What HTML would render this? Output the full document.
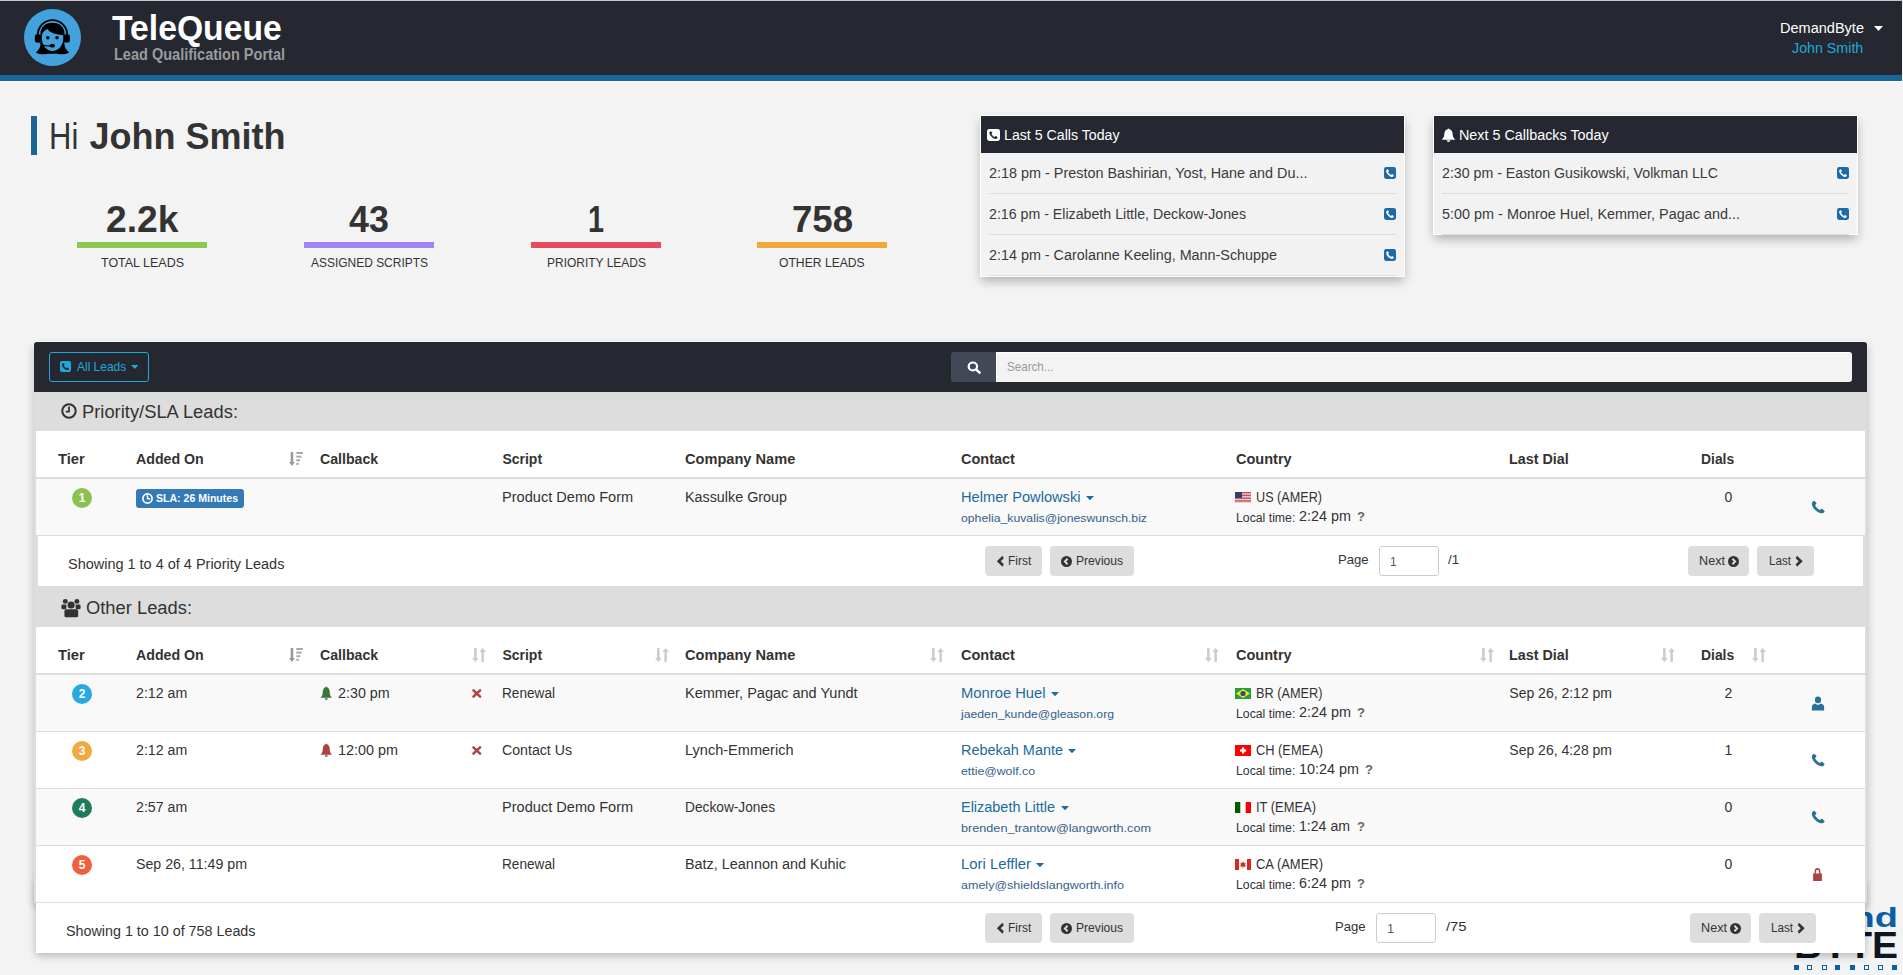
<!DOCTYPE html>
<html><head><meta charset="utf-8"><title>TeleQueue</title>
<style>
html,body{margin:0;padding:0;}
body{width:1903px;height:975px;overflow:hidden;position:relative;background:#f3f3f3;font-family:"Liberation Sans", sans-serif;}
.t{position:absolute;white-space:pre;}
svg{display:block;}
</style></head><body>
<div style="position:absolute;left:0px;top:0px;width:1903px;height:1px;background:#c9c7c9"></div>
<div style="position:absolute;left:0px;top:1px;width:1902px;height:74px;background:#252830"></div>
<div style="position:absolute;left:0px;top:75px;width:1902px;height:6px;background:#1b6698"></div>
<div style="position:absolute;left:0px;top:81px;width:1902px;height:1px;background:#fcfaf8"></div>
<svg style="position:absolute;left:24px;top:9px;" width="57" height="57" viewBox="0 0 57 57" ><circle cx="28.5" cy="28.5" r="28.5" fill="#43a2dc"/><path fill="#000" d="M28.5,13.8 C21,13.8 16.4,18.5 16.4,25 L16.6,34 C16.8,38 15,41 11.8,43.5 C15,45.5 20,45.8 24,44.8 L33,44.8 C37,45.8 42,45.5 45.2,43.5 C42,41 40.2,38 40.4,34 L40.6,25 C40.6,18.5 36,13.8 28.5,13.8 Z"/><path fill="#43a2dc" d="M17.8,27 C18,24 20,21.5 23.5,20 C25,22.5 28,24 32,25 C35,25.7 38,26 39.2,26.2 C39.4,27 39.4,28 39.4,29 C39.4,36 34.5,42 28.5,42 C22.5,42 17.8,36 17.8,29 Z"/><circle cx="23.8" cy="28.8" r="1.75" fill="#000"/><circle cx="33" cy="28.8" r="1.75" fill="#000"/><path d="M13.8,25.8 A14.7,14.7 0 0 1 43.2,25.8" fill="none" stroke="#000" stroke-width="1.9"/><rect x="10.8" y="25.3" width="6.2" height="8.3" rx="2.6" fill="#000"/><rect x="39.7" y="25.3" width="6.2" height="8.3" rx="2.6" fill="#000"/><path d="M15.5,33 C17.5,36 22,37.2 26,36.8" fill="none" stroke="#000" stroke-width="1.3"/><ellipse cx="28.3" cy="36.7" rx="2.6" ry="1.9" fill="#000"/></svg>
<div class="t" style="left:111.60px;top:6.95px;font-size:35px;line-height:42px;font-weight:700;color:#fff;transform:scaleX(0.9622);transform-origin:0 0;">TeleQueue</div>
<div class="t" style="left:113.60px;top:44.50px;font-size:16px;line-height:19px;font-weight:700;color:#9b9b9b;transform:scaleX(0.9072);transform-origin:0 0;">Lead Qualification Portal</div>
<div class="t" style="left:1779.80px;top:19.60px;font-size:14px;line-height:17px;font-weight:400;color:#fff;transform:scaleX(1.0378);transform-origin:0 0;">DemandByte</div>
<svg style="position:absolute;left:1873.5px;top:25.8px;" width="9" height="5" viewBox="0 0 9 5" ><path d="M0,0 H9 L4.5,5 Z" fill="#fff"/></svg>
<div class="t" style="left:1791.90px;top:39.60px;font-size:14px;line-height:17px;font-weight:400;color:#1fa8de;transform:scaleX(1.0179);transform-origin:0 0;">John Smith</div>
<div style="position:absolute;left:31px;top:116px;width:6px;height:39px;background:#1b6698"></div>
<div class="t" style="left:49.00px;top:114.60px;font-size:36px;line-height:43px;font-weight:400;color:#333;transform:scaleX(0.8618);transform-origin:0 0;-webkit-text-stroke:1px #f3f3f3;paint-order:stroke fill;">Hi</div>
<div class="t" style="left:89.60px;top:114.60px;font-size:36px;line-height:43px;font-weight:700;color:#333;">John Smith</div>
<div class="t" style="left:105.75px;top:197.90px;font-size:36px;line-height:43px;font-weight:700;color:#333;transform:scaleX(1.0346);transform-origin:0 0;">2.2k</div>
<div style="position:absolute;left:77px;top:242px;width:130px;height:6px;background:#8dc653"></div>
<div class="t" style="left:100.50px;top:255.45px;font-size:13px;line-height:16px;font-weight:400;color:#333;transform:scaleX(0.9599);transform-origin:0 0;">TOTAL LEADS</div>
<div class="t" style="left:349.10px;top:197.90px;font-size:36px;line-height:43px;font-weight:700;color:#333;transform:scaleX(0.9938);transform-origin:0 0;">43</div>
<div style="position:absolute;left:304px;top:242px;width:130px;height:6px;background:#a086f6"></div>
<div class="t" style="left:310.50px;top:255.45px;font-size:13px;line-height:16px;font-weight:400;color:#333;transform:scaleX(0.9202);transform-origin:0 0;">ASSIGNED SCRIPTS</div>
<div class="t" style="left:588.00px;top:197.90px;font-size:36px;line-height:43px;font-weight:700;color:#333;transform:scaleX(0.7988);transform-origin:0 0;">1</div>
<div style="position:absolute;left:531px;top:242px;width:130px;height:6px;background:#e64a5e"></div>
<div class="t" style="left:546.50px;top:255.45px;font-size:13px;line-height:16px;font-weight:400;color:#333;transform:scaleX(0.9217);transform-origin:0 0;">PRIORITY LEADS</div>
<div class="t" style="left:791.50px;top:197.90px;font-size:36px;line-height:43px;font-weight:700;color:#333;transform:scaleX(1.0153);transform-origin:0 0;">758</div>
<div style="position:absolute;left:757px;top:242px;width:130px;height:6px;background:#f1a83f"></div>
<div class="t" style="left:779.15px;top:255.45px;font-size:13px;line-height:16px;font-weight:400;color:#333;transform:scaleX(0.9341);transform-origin:0 0;">OTHER LEADS</div>
<div style="position:absolute;left:981px;top:116px;width:423px;height:160px;background:#f2f2f2;box-shadow:0 0 0 1px #fff,0 5px 10px rgba(0,0,0,0.28)"></div>
<div style="position:absolute;left:981px;top:116px;width:423px;height:37px;background:#252830"></div>
<div class="t" style="left:989.00px;top:164.60px;font-size:14px;line-height:17px;font-weight:400;color:#3a3a3a;transform:scaleX(1.0282);transform-origin:0 0;">2:18 pm - Preston Bashirian, Yost, Hane and Du...</div>
<svg style="position:absolute;left:1384px;top:167px;overflow:visible" width="12" height="12" viewBox="0 0 100 100" preserveAspectRatio="none"><rect x="0" y="0" width="100" height="100" rx="18" fill="#1f6aa5"/><g transform="translate(14,14) scale(0.72)"><path fill="#fff" d="M22,6 C13,9 5,17 6,30 C9,57 44,92 71,95 C84,96 92,89 95,80 L80,64 C76,61 71,62 68,66 L63,72 C49,65 35,51 28,37 L34,31 C38,28 39,23 37,20 Z"/></g></svg>
<div style="position:absolute;left:989px;top:193px;width:407px;height:1px;background:#dcdcdc"></div>
<div class="t" style="left:989.00px;top:205.60px;font-size:14px;line-height:17px;font-weight:400;color:#3a3a3a;transform:scaleX(1.0131);transform-origin:0 0;">2:16 pm - Elizabeth Little, Deckow-Jones</div>
<svg style="position:absolute;left:1384px;top:208px;overflow:visible" width="12" height="12" viewBox="0 0 100 100" preserveAspectRatio="none"><rect x="0" y="0" width="100" height="100" rx="18" fill="#1f6aa5"/><g transform="translate(14,14) scale(0.72)"><path fill="#fff" d="M22,6 C13,9 5,17 6,30 C9,57 44,92 71,95 C84,96 92,89 95,80 L80,64 C76,61 71,62 68,66 L63,72 C49,65 35,51 28,37 L34,31 C38,28 39,23 37,20 Z"/></g></svg>
<div style="position:absolute;left:989px;top:234px;width:407px;height:1px;background:#dcdcdc"></div>
<div class="t" style="left:989.00px;top:246.60px;font-size:14px;line-height:17px;font-weight:400;color:#3a3a3a;transform:scaleX(1.0251);transform-origin:0 0;">2:14 pm - Carolanne Keeling, Mann-Schuppe</div>
<svg style="position:absolute;left:1384px;top:249px;overflow:visible" width="12" height="12" viewBox="0 0 100 100" preserveAspectRatio="none"><rect x="0" y="0" width="100" height="100" rx="18" fill="#1f6aa5"/><g transform="translate(14,14) scale(0.72)"><path fill="#fff" d="M22,6 C13,9 5,17 6,30 C9,57 44,92 71,95 C84,96 92,89 95,80 L80,64 C76,61 71,62 68,66 L63,72 C49,65 35,51 28,37 L34,31 C38,28 39,23 37,20 Z"/></g></svg>
<div style="position:absolute;left:989px;top:275px;width:407px;height:1px;background:#dcdcdc"></div>
<div class="t" style="left:1004.00px;top:126.60px;font-size:14px;line-height:17px;font-weight:400;color:#fff;transform:scaleX(1.0119);transform-origin:0 0;">Last 5 Calls Today</div>
<svg style="position:absolute;left:987px;top:129px;overflow:visible" width="13" height="12" viewBox="0 0 100 100" preserveAspectRatio="none"><rect x="0" y="0" width="100" height="100" rx="18" fill="#fff"/><g transform="translate(14,14) scale(0.72)"><path fill="#252830" d="M22,6 C13,9 5,17 6,30 C9,57 44,92 71,95 C84,96 92,89 95,80 L80,64 C76,61 71,62 68,66 L63,72 C49,65 35,51 28,37 L34,31 C38,28 39,23 37,20 Z"/></g></svg>
<div style="position:absolute;left:1434px;top:116px;width:423px;height:118px;background:#f2f2f2;box-shadow:0 0 0 1px #fff,0 5px 10px rgba(0,0,0,0.28)"></div>
<div style="position:absolute;left:1434px;top:116px;width:423px;height:37px;background:#252830"></div>
<div class="t" style="left:1442.00px;top:164.60px;font-size:14px;line-height:17px;font-weight:400;color:#3a3a3a;transform:scaleX(1.0134);transform-origin:0 0;">2:30 pm - Easton Gusikowski, Volkman LLC</div>
<svg style="position:absolute;left:1837px;top:167px;overflow:visible" width="12" height="12" viewBox="0 0 100 100" preserveAspectRatio="none"><rect x="0" y="0" width="100" height="100" rx="18" fill="#1f6aa5"/><g transform="translate(14,14) scale(0.72)"><path fill="#fff" d="M22,6 C13,9 5,17 6,30 C9,57 44,92 71,95 C84,96 92,89 95,80 L80,64 C76,61 71,62 68,66 L63,72 C49,65 35,51 28,37 L34,31 C38,28 39,23 37,20 Z"/></g></svg>
<div style="position:absolute;left:1442px;top:193px;width:407px;height:1px;background:#dcdcdc"></div>
<div class="t" style="left:1442.00px;top:205.60px;font-size:14px;line-height:17px;font-weight:400;color:#3a3a3a;transform:scaleX(1.0294);transform-origin:0 0;">5:00 pm - Monroe Huel, Kemmer, Pagac and...</div>
<svg style="position:absolute;left:1837px;top:208px;overflow:visible" width="12" height="12" viewBox="0 0 100 100" preserveAspectRatio="none"><rect x="0" y="0" width="100" height="100" rx="18" fill="#1f6aa5"/><g transform="translate(14,14) scale(0.72)"><path fill="#fff" d="M22,6 C13,9 5,17 6,30 C9,57 44,92 71,95 C84,96 92,89 95,80 L80,64 C76,61 71,62 68,66 L63,72 C49,65 35,51 28,37 L34,31 C38,28 39,23 37,20 Z"/></g></svg>
<div style="position:absolute;left:1442px;top:234px;width:407px;height:1px;background:#dcdcdc"></div>
<div class="t" style="left:1459.00px;top:126.60px;font-size:14px;line-height:17px;font-weight:400;color:#fff;transform:scaleX(1.0250);transform-origin:0 0;">Next 5 Callbacks Today</div>
<svg style="position:absolute;left:1440.5px;top:128px;overflow:visible" width="15" height="14" viewBox="0 0 100 100" preserveAspectRatio="none"><path fill="#fff" d="M50,4 C47,4 45,6 45,9 C30,12 22,26 22,44 C22,64 14,74 4,84 L96,84 C86,74 78,64 78,44 C78,26 70,12 55,9 C55,6 53,4 50,4 Z"/><path fill="#fff" d="M38,88 A12,12 0 0 0 62,88 Z"/></svg>
<div class="t" style="left:1747.50px;top:901.40px;font-size:28px;line-height:34px;font-weight:700;color:#0b5ea8;transform:scaleX(1.3579);transform-origin:0 0;">Demand</div>
<div class="t" style="left:1793.60px;top:924.30px;font-size:36px;line-height:43px;font-weight:700;color:#0e1621;transform:scaleX(1.0832);transform-origin:0 0;">BYTE</div>
<div style="position:absolute;left:1794px;top:965px;width:5px;height:5px;background:#0b5ea8"></div>
<div style="position:absolute;left:1807px;top:965px;width:5px;height:5px;border:1.3px solid #0b5ea8;box-sizing:border-box"></div>
<div style="position:absolute;left:1822px;top:965px;width:5px;height:5px;border:1.3px solid #0b5ea8;box-sizing:border-box"></div>
<div style="position:absolute;left:1835px;top:965px;width:5px;height:5px;background:#0b5ea8"></div>
<div style="position:absolute;left:1850px;top:965px;width:5px;height:5px;background:#0b5ea8"></div>
<div style="position:absolute;left:1864px;top:965px;width:5px;height:5px;border:1.3px solid #0b5ea8;box-sizing:border-box"></div>
<div style="position:absolute;left:1878px;top:965px;width:5px;height:5px;border:1.3px solid #0b5ea8;box-sizing:border-box"></div>
<div style="position:absolute;left:1892px;top:965px;width:5px;height:5px;background:#0b5ea8"></div>
<div style="position:absolute;left:36px;top:880px;width:1829px;height:73px;background:#fff;box-shadow:0 3px 8px rgba(0,0,0,0.25)"></div>
<div style="position:absolute;left:33px;top:341px;width:1835px;height:52px;background:#fff;border-radius:4px 4px 0 0"></div>
<div style="position:absolute;left:34px;top:342px;width:1833px;height:561px;background:#dddddd;border-radius:3px 3px 0 0;box-shadow:0 4px 8px rgba(0,0,0,0.25)"></div>
<div style="position:absolute;left:34px;top:342px;width:1833px;height:50px;background:#252830;border-radius:3px 3px 0 0"></div>
<div style="position:absolute;left:49px;top:352px;width:98px;height:28px;border:1px solid #1fa8de;border-radius:3px"></div>
<svg style="position:absolute;left:59.5px;top:361px;overflow:visible" width="11" height="11" viewBox="0 0 100 100" preserveAspectRatio="none"><rect x="0" y="0" width="100" height="100" rx="18" fill="#1fa8de"/><g transform="translate(14,14) scale(0.72)"><path fill="#252830" d="M22,6 C13,9 5,17 6,30 C9,57 44,92 71,95 C84,96 92,89 95,80 L80,64 C76,61 71,62 68,66 L63,72 C49,65 35,51 28,37 L34,31 C38,28 39,23 37,20 Z"/></g></svg>
<div class="t" style="left:77.30px;top:359.45px;font-size:13px;line-height:16px;font-weight:400;color:#1fa8de;transform:scaleX(0.9199);transform-origin:0 0;">All Leads</div>
<svg style="position:absolute;left:130.5px;top:365px;" width="7.5" height="4" viewBox="0 0 7.5 4" ><path d="M0,0 H7.5 L3.75,4 Z" fill="#1fa8de"/></svg>
<div style="position:absolute;left:951px;top:352px;width:45px;height:30px;background:#434857;border-radius:3px 0 0 3px"></div>
<svg style="position:absolute;left:966.5px;top:361px;overflow:visible" width="14" height="13" viewBox="0 0 100 100" preserveAspectRatio="none"><circle cx="42" cy="42" r="30" fill="none" stroke="#fff" stroke-width="16"/><path d="M64,64 L90,90" stroke="#fff" stroke-width="18" stroke-linecap="round"/></svg>
<div style="position:absolute;left:996px;top:352px;width:855px;height:29px;background:#f3f3f3;border-top:1px solid #fff;border-left:1px solid #fff;border-radius:0 3px 3px 0;box-sizing:content-box;width:855px;height:29px"></div>
<div class="t" style="left:1006.50px;top:359.45px;font-size:13px;line-height:16px;font-weight:400;color:#999;transform:scaleX(0.8937);transform-origin:0 0;">Search...</div>
<div class="t" style="left:82.00px;top:400.70px;font-size:18px;line-height:22px;font-weight:400;color:#333;transform:scaleX(1.0190);transform-origin:0 0;">Priority/SLA Leads:</div>
<svg style="position:absolute;left:61px;top:403px;overflow:visible" width="16" height="16" viewBox="0 0 100 100" preserveAspectRatio="none"><circle cx="50" cy="50" r="42" fill="none" stroke="#333" stroke-width="13"/><path d="M50,22 V54 H30" fill="none" stroke="#333" stroke-width="11"/></svg>
<div class="t" style="left:85.80px;top:596.70px;font-size:18px;line-height:22px;font-weight:400;color:#333;transform:scaleX(1.0186);transform-origin:0 0;">Other Leads:</div>
<svg style="position:absolute;left:60.5px;top:598.5px;overflow:visible" width="20" height="18.5" viewBox="0 0 100 100" preserveAspectRatio="none"><ellipse cx="21.5" cy="13" rx="12.5" ry="13" fill="#333"/><ellipse cx="79.5" cy="13" rx="12.5" ry="13" fill="#333"/><ellipse cx="50.5" cy="33" rx="18" ry="19" fill="#333"/><rect x="2" y="30" width="25" height="25" rx="7" fill="#333"/><rect x="73" y="30" width="25" height="25" rx="7" fill="#333"/><rect x="17" y="56" width="69" height="43" rx="9" fill="#333"/></svg>
<div style="position:absolute;left:36px;top:431px;width:1829px;height:46px;background:#fff"></div>
<div style="position:absolute;left:36px;top:477px;width:1829px;height:2px;background:#dddddd"></div>
<div class="t" style="left:58.00px;top:450.90px;font-size:14px;line-height:17px;font-weight:700;color:#333;transform:scaleX(1.0536);transform-origin:0 0;">Tier</div>
<div class="t" style="left:136.20px;top:450.90px;font-size:14px;line-height:17px;font-weight:700;color:#333;transform:scaleX(1.0136);transform-origin:0 0;">Added On</div>
<div class="t" style="left:319.90px;top:450.90px;font-size:14px;line-height:17px;font-weight:700;color:#333;transform:scaleX(1.0088);transform-origin:0 0;">Callback</div>
<div class="t" style="left:502.40px;top:450.90px;font-size:14px;line-height:17px;font-weight:700;color:#333;">Script</div>
<div class="t" style="left:685.40px;top:450.90px;font-size:14px;line-height:17px;font-weight:700;color:#333;transform:scaleX(1.0424);transform-origin:0 0;">Company Name</div>
<div class="t" style="left:960.50px;top:450.90px;font-size:14px;line-height:17px;font-weight:700;color:#333;transform:scaleX(1.0341);transform-origin:0 0;">Contact</div>
<div class="t" style="left:1235.60px;top:450.90px;font-size:14px;line-height:17px;font-weight:700;color:#333;transform:scaleX(1.0378);transform-origin:0 0;">Country</div>
<div class="t" style="left:1509.30px;top:450.90px;font-size:14px;line-height:17px;font-weight:700;color:#333;transform:scaleX(1.0230);transform-origin:0 0;">Last Dial</div>
<div class="t" style="left:1701.00px;top:450.90px;font-size:14px;line-height:17px;font-weight:700;color:#333;transform:scaleX(0.9920);transform-origin:0 0;">Dials</div>
<svg style="position:absolute;left:289px;top:452.3px;overflow:visible" width="14" height="14" viewBox="0 0 100 100" preserveAspectRatio="none"><path fill="#999" d="M12,0 H30 V72 H42 L21,100 L0,72 H12 Z"/><rect x="52" y="0" width="48" height="14" fill="#aaa"/><rect x="52" y="26" width="38" height="14" fill="#aaa"/><rect x="52" y="52" width="28" height="14" fill="#aaa"/><rect x="52" y="78" width="18" height="14" fill="#aaa"/></svg>
<div style="position:absolute;left:36px;top:479px;width:1829px;height:56px;background:#f9f9f9"></div>
<div style="position:absolute;left:36px;top:535px;width:1829px;height:1px;background:#dddddd"></div>
<div style="position:absolute;left:72px;top:488px;width:20px;height:20px;background:#8cc152;border-radius:50%"></div>
<div class="t" style="left:78.66px;top:491.30px;font-size:12px;line-height:14px;font-weight:700;color:#fff;">1</div>
<div style="position:absolute;left:136px;top:489px;width:108px;height:19px;background:#337ab7;border-radius:3px"></div>
<svg style="position:absolute;left:142px;top:492.5px;overflow:visible" width="11" height="11" viewBox="0 0 100 100" preserveAspectRatio="none"><circle cx="50" cy="50" r="42" fill="none" stroke="#fff" stroke-width="15"/><path d="M50,20 V52 H74" fill="none" stroke="#fff" stroke-width="13"/></svg>
<div class="t" style="left:155.60px;top:492.15px;font-size:11px;line-height:13px;font-weight:700;color:#fff;transform:scaleX(0.9582);transform-origin:0 0;">SLA: 26 Minutes</div>
<div class="t" style="left:502.40px;top:488.60px;font-size:14px;line-height:17px;font-weight:400;color:#333;transform:scaleX(1.0409);transform-origin:0 0;">Product Demo Form</div>
<div class="t" style="left:685.40px;top:488.60px;font-size:14px;line-height:17px;font-weight:400;color:#333;transform:scaleX(1.0240);transform-origin:0 0;">Kassulke Group</div>
<div class="t" style="left:960.50px;top:488.60px;font-size:14px;line-height:17px;font-weight:400;color:#236a9c;transform:scaleX(1.0450);transform-origin:0 0;">Helmer Powlowski</div>
<svg style="position:absolute;left:1086px;top:496px;" width="8" height="4.3" viewBox="0 0 8 4.3" ><path d="M0,0 H8 L4.0,4.3 Z" fill="#236a9c"/></svg>
<div class="t" style="left:960.50px;top:511.48px;font-size:11.5px;line-height:14px;font-weight:400;color:#34608a;transform:scaleX(1.0647);transform-origin:0 0;">ophelia_kuvalis@joneswunsch.biz</div>
<svg style="position:absolute;left:1235px;top:492px;" width="16" height="11" viewBox="0 0 16 11" ><rect width="16" height="11" fill="#fff"/><rect y="0.00" width="16" height="0.79" fill="#b22234"/><rect y="1.57" width="16" height="0.79" fill="#b22234"/><rect y="3.14" width="16" height="0.79" fill="#b22234"/><rect y="4.71" width="16" height="0.79" fill="#b22234"/><rect y="6.29" width="16" height="0.79" fill="#b22234"/><rect y="7.86" width="16" height="0.79" fill="#b22234"/><rect y="9.43" width="16" height="0.79" fill="#b22234"/><rect width="7" height="6" fill="#3c3b6e"/></svg>
<div class="t" style="left:1255.70px;top:488.60px;font-size:14px;line-height:17px;font-weight:400;color:#333;transform:scaleX(0.9026);transform-origin:0 0;">US (AMER)</div>
<div class="t" style="left:1235.50px;top:510.60px;font-size:12px;line-height:14px;font-weight:400;color:#333;transform:scaleX(1.0219);transform-origin:0 0;">Local time:</div>
<div class="t" style="left:1299.40px;top:508.40px;font-size:14px;line-height:17px;font-weight:400;color:#333;transform:scaleX(1.0278);transform-origin:0 0;">2:24 pm</div>
<div class="t" style="left:1357.00px;top:509.25px;font-size:13px;line-height:16px;font-weight:700;color:#666;">?</div>
<div class="t" style="left:1724.60px;top:488.60px;font-size:14px;line-height:17px;font-weight:400;color:#333;">0</div>
<svg style="position:absolute;left:1810.6px;top:500px;overflow:visible" width="14.4" height="14" viewBox="0 0 100 100" preserveAspectRatio="none"><path fill="#2a6f96" d="M22,6 C13,9 5,17 6,30 C9,57 44,92 71,95 C84,96 92,89 95,80 L80,64 C76,61 71,62 68,66 L63,72 C49,65 35,51 28,37 L34,31 C38,28 39,23 37,20 Z"/></svg>
<div style="position:absolute;left:38px;top:536px;width:1825px;height:50px;background:#fff"></div>
<div class="t" style="left:68.10px;top:556.10px;font-size:14px;line-height:17px;font-weight:400;color:#333;transform:scaleX(1.0337);transform-origin:0 0;">Showing 1 to 4 of 4 Priority Leads</div>
<div style="position:absolute;left:985px;top:546px;width:57px;height:30px;background:#dddddd;border-radius:4px"></div>
<div style="position:absolute;left:1050px;top:546px;width:84px;height:30px;background:#dddddd;border-radius:4px"></div>
<div style="position:absolute;left:1688px;top:546px;width:61px;height:30px;background:#dddddd;border-radius:4px"></div>
<div style="position:absolute;left:1757px;top:546px;width:57px;height:30px;background:#dddddd;border-radius:4px"></div>
<svg style="position:absolute;left:996.5px;top:555.5px;overflow:visible" width="7.5" height="10.5" viewBox="0 0 100 100" preserveAspectRatio="none"><path d="M82,10 L24,50 L82,90" fill="none" stroke="#333" stroke-width="30" stroke-linejoin="miter" stroke-miterlimit="10"/></svg>
<div class="t" style="left:1007.90px;top:553.80px;font-size:12px;line-height:14px;font-weight:400;color:#333;transform:scaleX(0.9945);transform-origin:0 0;">First</div>
<svg style="position:absolute;left:1061px;top:556px;overflow:visible" width="11" height="11" viewBox="0 0 100 100" preserveAspectRatio="none"><circle cx="50" cy="50" r="50" fill="#333"/><path d="M60,25 L35,50 L60,75" fill="none" stroke="#ddd" stroke-width="17"/></svg>
<div class="t" style="left:1075.80px;top:553.80px;font-size:12px;line-height:14px;font-weight:400;color:#333;transform:scaleX(1.0088);transform-origin:0 0;">Previous</div>
<div class="t" style="left:1699.30px;top:553.80px;font-size:12px;line-height:14px;font-weight:400;color:#333;transform:scaleX(1.0532);transform-origin:0 0;">Next</div>
<svg style="position:absolute;left:1728.2px;top:556px;overflow:visible" width="11" height="11" viewBox="0 0 100 100" preserveAspectRatio="none"><circle cx="50" cy="50" r="50" fill="#333"/><path d="M40,25 L65,50 L40,75" fill="none" stroke="#ddd" stroke-width="17"/></svg>
<div class="t" style="left:1769.00px;top:553.80px;font-size:12px;line-height:14px;font-weight:400;color:#333;transform:scaleX(0.9697);transform-origin:0 0;">Last</div>
<svg style="position:absolute;left:1794.7px;top:555.5px;overflow:visible" width="7.5" height="10.5" viewBox="0 0 100 100" preserveAspectRatio="none"><path d="M18,10 L76,50 L18,90" fill="none" stroke="#333" stroke-width="30" stroke-linejoin="miter" stroke-miterlimit="10"/></svg>
<div class="t" style="left:1337.60px;top:552.45px;font-size:13px;line-height:16px;font-weight:400;color:#333;transform:scaleX(1.0074);transform-origin:0 0;">Page</div>
<div style="position:absolute;left:1379px;top:546px;width:58px;height:28px;background:#fff;border:1px solid #cccccc;border-radius:3px"></div>
<div class="t" style="left:1390.00px;top:554.80px;font-size:12px;line-height:14px;font-weight:400;color:#555;">1</div>
<div class="t" style="left:1448.30px;top:552.45px;font-size:13px;line-height:16px;font-weight:400;color:#333;transform:scaleX(1.0236);transform-origin:0 0;">/1</div>
<div style="position:absolute;left:36px;top:627px;width:1829px;height:46px;background:#fff"></div>
<div style="position:absolute;left:36px;top:673px;width:1829px;height:2px;background:#dddddd"></div>
<div class="t" style="left:58.00px;top:646.60px;font-size:14px;line-height:17px;font-weight:700;color:#333;transform:scaleX(1.0536);transform-origin:0 0;">Tier</div>
<div class="t" style="left:136.20px;top:646.60px;font-size:14px;line-height:17px;font-weight:700;color:#333;transform:scaleX(1.0136);transform-origin:0 0;">Added On</div>
<div class="t" style="left:319.90px;top:646.60px;font-size:14px;line-height:17px;font-weight:700;color:#333;transform:scaleX(1.0088);transform-origin:0 0;">Callback</div>
<div class="t" style="left:502.40px;top:646.60px;font-size:14px;line-height:17px;font-weight:700;color:#333;">Script</div>
<div class="t" style="left:685.40px;top:646.60px;font-size:14px;line-height:17px;font-weight:700;color:#333;transform:scaleX(1.0424);transform-origin:0 0;">Company Name</div>
<div class="t" style="left:960.50px;top:646.60px;font-size:14px;line-height:17px;font-weight:700;color:#333;transform:scaleX(1.0341);transform-origin:0 0;">Contact</div>
<div class="t" style="left:1235.60px;top:646.60px;font-size:14px;line-height:17px;font-weight:700;color:#333;transform:scaleX(1.0378);transform-origin:0 0;">Country</div>
<div class="t" style="left:1509.30px;top:646.60px;font-size:14px;line-height:17px;font-weight:700;color:#333;transform:scaleX(1.0230);transform-origin:0 0;">Last Dial</div>
<div class="t" style="left:1701.00px;top:646.60px;font-size:14px;line-height:17px;font-weight:700;color:#333;transform:scaleX(0.9920);transform-origin:0 0;">Dials</div>
<svg style="position:absolute;left:289px;top:648px;overflow:visible" width="14" height="14" viewBox="0 0 100 100" preserveAspectRatio="none"><path fill="#999" d="M12,0 H30 V72 H42 L21,100 L0,72 H12 Z"/><rect x="52" y="0" width="48" height="14" fill="#aaa"/><rect x="52" y="26" width="38" height="14" fill="#aaa"/><rect x="52" y="52" width="28" height="14" fill="#aaa"/><rect x="52" y="78" width="18" height="14" fill="#aaa"/></svg>
<svg style="position:absolute;left:472px;top:648px;overflow:visible" width="14" height="14" viewBox="0 0 100 100" preserveAspectRatio="none"><path fill="#cccccc" d="M15,0 H33 V72 H48 L24,100 L0,72 H15 Z"/><path fill="#cccccc" d="M67,100 H85 V28 H100 L76,0 L52,28 H67 Z"/></svg>
<svg style="position:absolute;left:655px;top:648px;overflow:visible" width="14" height="14" viewBox="0 0 100 100" preserveAspectRatio="none"><path fill="#cccccc" d="M15,0 H33 V72 H48 L24,100 L0,72 H15 Z"/><path fill="#cccccc" d="M67,100 H85 V28 H100 L76,0 L52,28 H67 Z"/></svg>
<svg style="position:absolute;left:930px;top:648px;overflow:visible" width="14" height="14" viewBox="0 0 100 100" preserveAspectRatio="none"><path fill="#cccccc" d="M15,0 H33 V72 H48 L24,100 L0,72 H15 Z"/><path fill="#cccccc" d="M67,100 H85 V28 H100 L76,0 L52,28 H67 Z"/></svg>
<svg style="position:absolute;left:1205px;top:648px;overflow:visible" width="14" height="14" viewBox="0 0 100 100" preserveAspectRatio="none"><path fill="#cccccc" d="M15,0 H33 V72 H48 L24,100 L0,72 H15 Z"/><path fill="#cccccc" d="M67,100 H85 V28 H100 L76,0 L52,28 H67 Z"/></svg>
<svg style="position:absolute;left:1480px;top:648px;overflow:visible" width="14" height="14" viewBox="0 0 100 100" preserveAspectRatio="none"><path fill="#cccccc" d="M15,0 H33 V72 H48 L24,100 L0,72 H15 Z"/><path fill="#cccccc" d="M67,100 H85 V28 H100 L76,0 L52,28 H67 Z"/></svg>
<svg style="position:absolute;left:1661px;top:648px;overflow:visible" width="14" height="14" viewBox="0 0 100 100" preserveAspectRatio="none"><path fill="#cccccc" d="M15,0 H33 V72 H48 L24,100 L0,72 H15 Z"/><path fill="#cccccc" d="M67,100 H85 V28 H100 L76,0 L52,28 H67 Z"/></svg>
<svg style="position:absolute;left:1752px;top:648px;overflow:visible" width="14" height="14" viewBox="0 0 100 100" preserveAspectRatio="none"><path fill="#cccccc" d="M15,0 H33 V72 H48 L24,100 L0,72 H15 Z"/><path fill="#cccccc" d="M67,100 H85 V28 H100 L76,0 L52,28 H67 Z"/></svg>
<div style="position:absolute;left:36px;top:675px;width:1829px;height:56px;background:#f9f9f9"></div>
<div style="position:absolute;left:36px;top:731px;width:1829px;height:1px;background:#dddddd"></div>
<div style="position:absolute;left:72px;top:684px;width:20px;height:20px;background:#27a9e1;border-radius:50%"></div>
<div class="t" style="left:78.66px;top:687.30px;font-size:12px;line-height:14px;font-weight:700;color:#fff;">2</div>
<div class="t" style="left:136.20px;top:684.60px;font-size:14px;line-height:17px;font-weight:400;color:#333;transform:scaleX(1.0120);transform-origin:0 0;">2:12 am</div>
<svg style="position:absolute;left:320px;top:686px;overflow:visible" width="12.5" height="14" viewBox="0 0 100 100" preserveAspectRatio="none"><path fill="#3c763d" d="M50,4 C47,4 45,6 45,9 C30,12 22,26 22,44 C22,64 14,74 4,84 L96,84 C86,74 78,64 78,44 C78,26 70,12 55,9 C55,6 53,4 50,4 Z"/><path fill="#3c763d" d="M38,88 A12,12 0 0 0 62,88 Z"/></svg>
<div class="t" style="left:337.50px;top:684.60px;font-size:14px;line-height:17px;font-weight:400;color:#333;transform:scaleX(1.0219);transform-origin:0 0;">2:30 pm</div>
<svg style="position:absolute;left:472px;top:689px;overflow:visible" width="9.5" height="9" viewBox="0 0 100 100" preserveAspectRatio="none"><path d="M15,15 L85,85 M85,15 L15,85" stroke="#a94442" stroke-width="26" stroke-linecap="round"/></svg>
<div class="t" style="left:502.40px;top:684.60px;font-size:14px;line-height:17px;font-weight:400;color:#333;transform:scaleX(0.9728);transform-origin:0 0;">Renewal</div>
<div class="t" style="left:685.40px;top:684.60px;font-size:14px;line-height:17px;font-weight:400;color:#333;transform:scaleX(1.0378);transform-origin:0 0;">Kemmer, Pagac and Yundt</div>
<div class="t" style="left:960.50px;top:684.60px;font-size:14px;line-height:17px;font-weight:400;color:#236a9c;transform:scaleX(1.0554);transform-origin:0 0;">Monroe Huel</div>
<svg style="position:absolute;left:1051.4px;top:692px;" width="8" height="4.3" viewBox="0 0 8 4.3" ><path d="M0,0 H8 L4.0,4.3 Z" fill="#236a9c"/></svg>
<div class="t" style="left:960.50px;top:707.48px;font-size:11.5px;line-height:14px;font-weight:400;color:#34608a;transform:scaleX(1.0622);transform-origin:0 0;">jaeden_kunde@gleason.org</div>
<svg style="position:absolute;left:1235px;top:688px;" width="16" height="11" viewBox="0 0 16 11" ><rect width="16" height="11" fill="#229e45"/><path d="M8,1 L15,5.5 L8,10 L1,5.5 Z" fill="#f8e509"/><circle cx="8" cy="5.5" r="2.6" fill="#2b49a3"/></svg>
<div class="t" style="left:1255.70px;top:684.60px;font-size:14px;line-height:17px;font-weight:400;color:#333;transform:scaleX(0.9080);transform-origin:0 0;">BR (AMER)</div>
<div class="t" style="left:1235.50px;top:706.60px;font-size:12px;line-height:14px;font-weight:400;color:#333;transform:scaleX(1.0219);transform-origin:0 0;">Local time:</div>
<div class="t" style="left:1299.40px;top:704.40px;font-size:14px;line-height:17px;font-weight:400;color:#333;transform:scaleX(1.0278);transform-origin:0 0;">2:24 pm</div>
<div class="t" style="left:1357.00px;top:705.25px;font-size:13px;line-height:16px;font-weight:700;color:#666;">?</div>
<div class="t" style="left:1509.30px;top:684.60px;font-size:14px;line-height:17px;font-weight:400;color:#333;">Sep 26, 2:12 pm</div>
<div class="t" style="left:1724.60px;top:684.60px;font-size:14px;line-height:17px;font-weight:400;color:#333;">2</div>
<svg style="position:absolute;left:1811px;top:696px;overflow:visible" width="14" height="15" viewBox="0 0 100 100" preserveAspectRatio="none"><circle cx="50" cy="26" r="22" fill="#2a6f96"/><path fill="#2a6f96" d="M6,96 L6,78 C6,62 16,52 30,50 C36,56 44,58 50,58 C56,58 64,56 70,50 C84,52 94,62 94,78 L94,96 Z"/></svg>
<div style="position:absolute;left:36px;top:732px;width:1829px;height:56px;background:#ffffff"></div>
<div style="position:absolute;left:36px;top:788px;width:1829px;height:1px;background:#dddddd"></div>
<div style="position:absolute;left:72px;top:741px;width:20px;height:20px;background:#f0a840;border-radius:50%"></div>
<div class="t" style="left:78.66px;top:744.30px;font-size:12px;line-height:14px;font-weight:700;color:#fff;">3</div>
<div class="t" style="left:136.20px;top:741.60px;font-size:14px;line-height:17px;font-weight:400;color:#333;transform:scaleX(1.0120);transform-origin:0 0;">2:12 am</div>
<svg style="position:absolute;left:320px;top:743px;overflow:visible" width="12.5" height="14" viewBox="0 0 100 100" preserveAspectRatio="none"><path fill="#a94442" d="M50,4 C47,4 45,6 45,9 C30,12 22,26 22,44 C22,64 14,74 4,84 L96,84 C86,74 78,64 78,44 C78,26 70,12 55,9 C55,6 53,4 50,4 Z"/><path fill="#a94442" d="M38,88 A12,12 0 0 0 62,88 Z"/></svg>
<div class="t" style="left:337.50px;top:741.60px;font-size:14px;line-height:17px;font-weight:400;color:#333;transform:scaleX(1.0278);transform-origin:0 0;">12:00 pm</div>
<svg style="position:absolute;left:472px;top:746px;overflow:visible" width="9.5" height="9" viewBox="0 0 100 100" preserveAspectRatio="none"><path d="M15,15 L85,85 M85,15 L15,85" stroke="#a94442" stroke-width="26" stroke-linecap="round"/></svg>
<div class="t" style="left:502.40px;top:741.60px;font-size:14px;line-height:17px;font-weight:400;color:#333;transform:scaleX(1.0108);transform-origin:0 0;">Contact Us</div>
<div class="t" style="left:685.40px;top:741.60px;font-size:14px;line-height:17px;font-weight:400;color:#333;transform:scaleX(1.0381);transform-origin:0 0;">Lynch-Emmerich</div>
<div class="t" style="left:960.50px;top:741.60px;font-size:14px;line-height:17px;font-weight:400;color:#236a9c;transform:scaleX(1.0319);transform-origin:0 0;">Rebekah Mante</div>
<svg style="position:absolute;left:1068px;top:749px;" width="8" height="4.3" viewBox="0 0 8 4.3" ><path d="M0,0 H8 L4.0,4.3 Z" fill="#236a9c"/></svg>
<div class="t" style="left:960.50px;top:764.48px;font-size:11.5px;line-height:14px;font-weight:400;color:#34608a;transform:scaleX(1.0693);transform-origin:0 0;">ettie@wolf.co</div>
<svg style="position:absolute;left:1235px;top:745px;" width="16" height="11" viewBox="0 0 16 11" ><rect width="16" height="11" fill="#f00"/><rect x="7" y="2.5" width="2.2" height="6" fill="#fff"/><rect x="5" y="4.4" width="6.2" height="2.2" fill="#fff"/></svg>
<div class="t" style="left:1255.70px;top:741.60px;font-size:14px;line-height:17px;font-weight:400;color:#333;transform:scaleX(0.9162);transform-origin:0 0;">CH (EMEA)</div>
<div class="t" style="left:1235.50px;top:763.60px;font-size:12px;line-height:14px;font-weight:400;color:#333;transform:scaleX(1.0219);transform-origin:0 0;">Local time:</div>
<div class="t" style="left:1299.40px;top:761.40px;font-size:14px;line-height:17px;font-weight:400;color:#333;transform:scaleX(1.0278);transform-origin:0 0;">10:24 pm</div>
<div class="t" style="left:1365.00px;top:762.25px;font-size:13px;line-height:16px;font-weight:700;color:#666;">?</div>
<div class="t" style="left:1509.30px;top:741.60px;font-size:14px;line-height:17px;font-weight:400;color:#333;">Sep 26, 4:28 pm</div>
<div class="t" style="left:1724.60px;top:741.60px;font-size:14px;line-height:17px;font-weight:400;color:#333;">1</div>
<svg style="position:absolute;left:1810.6px;top:753px;overflow:visible" width="14.4" height="14" viewBox="0 0 100 100" preserveAspectRatio="none"><path fill="#2a6f96" d="M22,6 C13,9 5,17 6,30 C9,57 44,92 71,95 C84,96 92,89 95,80 L80,64 C76,61 71,62 68,66 L63,72 C49,65 35,51 28,37 L34,31 C38,28 39,23 37,20 Z"/></svg>
<div style="position:absolute;left:36px;top:789px;width:1829px;height:56px;background:#f9f9f9"></div>
<div style="position:absolute;left:36px;top:845px;width:1829px;height:1px;background:#dddddd"></div>
<div style="position:absolute;left:72px;top:798px;width:20px;height:20px;background:#1d7d5b;border-radius:50%"></div>
<div class="t" style="left:78.66px;top:801.30px;font-size:12px;line-height:14px;font-weight:700;color:#fff;">4</div>
<div class="t" style="left:136.20px;top:798.60px;font-size:14px;line-height:17px;font-weight:400;color:#333;transform:scaleX(1.0120);transform-origin:0 0;">2:57 am</div>
<div class="t" style="left:502.40px;top:798.60px;font-size:14px;line-height:17px;font-weight:400;color:#333;transform:scaleX(1.0409);transform-origin:0 0;">Product Demo Form</div>
<div class="t" style="left:685.40px;top:798.60px;font-size:14px;line-height:17px;font-weight:400;color:#333;transform:scaleX(0.9801);transform-origin:0 0;">Deckow-Jones</div>
<div class="t" style="left:960.50px;top:798.60px;font-size:14px;line-height:17px;font-weight:400;color:#236a9c;transform:scaleX(1.0323);transform-origin:0 0;">Elizabeth Little</div>
<svg style="position:absolute;left:1061px;top:806px;" width="8" height="4.3" viewBox="0 0 8 4.3" ><path d="M0,0 H8 L4.0,4.3 Z" fill="#236a9c"/></svg>
<div class="t" style="left:960.50px;top:821.48px;font-size:11.5px;line-height:14px;font-weight:400;color:#34608a;transform:scaleX(1.0997);transform-origin:0 0;">brenden_trantow@langworth.com</div>
<svg style="position:absolute;left:1235px;top:802px;" width="16" height="11" viewBox="0 0 16 11" ><rect width="16" height="11" fill="#fff"/><rect width="5.3" height="11" fill="#005a00"/><rect x="10.7" width="5.3" height="11" fill="#f40000"/></svg>
<div class="t" style="left:1255.70px;top:798.60px;font-size:14px;line-height:17px;font-weight:400;color:#333;transform:scaleX(0.9220);transform-origin:0 0;">IT (EMEA)</div>
<div class="t" style="left:1235.50px;top:820.60px;font-size:12px;line-height:14px;font-weight:400;color:#333;transform:scaleX(1.0219);transform-origin:0 0;">Local time:</div>
<div class="t" style="left:1299.40px;top:818.40px;font-size:14px;line-height:17px;font-weight:400;color:#333;transform:scaleX(1.0080);transform-origin:0 0;">1:24 am</div>
<div class="t" style="left:1357.00px;top:819.25px;font-size:13px;line-height:16px;font-weight:700;color:#666;">?</div>
<div class="t" style="left:1724.60px;top:798.60px;font-size:14px;line-height:17px;font-weight:400;color:#333;">0</div>
<svg style="position:absolute;left:1810.6px;top:810px;overflow:visible" width="14.4" height="14" viewBox="0 0 100 100" preserveAspectRatio="none"><path fill="#2a6f96" d="M22,6 C13,9 5,17 6,30 C9,57 44,92 71,95 C84,96 92,89 95,80 L80,64 C76,61 71,62 68,66 L63,72 C49,65 35,51 28,37 L34,31 C38,28 39,23 37,20 Z"/></svg>
<div style="position:absolute;left:36px;top:846px;width:1829px;height:56px;background:#ffffff"></div>
<div style="position:absolute;left:36px;top:902px;width:1829px;height:1px;background:#dddddd"></div>
<div style="position:absolute;left:72px;top:855px;width:20px;height:20px;background:#f0603f;border-radius:50%"></div>
<div class="t" style="left:78.66px;top:858.30px;font-size:12px;line-height:14px;font-weight:700;color:#fff;">5</div>
<div class="t" style="left:136.20px;top:855.60px;font-size:14px;line-height:17px;font-weight:400;color:#333;transform:scaleX(1.0138);transform-origin:0 0;">Sep 26, 11:49 pm</div>
<div class="t" style="left:502.40px;top:855.60px;font-size:14px;line-height:17px;font-weight:400;color:#333;transform:scaleX(0.9728);transform-origin:0 0;">Renewal</div>
<div class="t" style="left:685.40px;top:855.60px;font-size:14px;line-height:17px;font-weight:400;color:#333;transform:scaleX(1.0290);transform-origin:0 0;">Batz, Leannon and Kuhic</div>
<div class="t" style="left:960.50px;top:855.60px;font-size:14px;line-height:17px;font-weight:400;color:#236a9c;transform:scaleX(1.0621);transform-origin:0 0;">Lori Leffler</div>
<svg style="position:absolute;left:1036px;top:863px;" width="8" height="4.3" viewBox="0 0 8 4.3" ><path d="M0,0 H8 L4.0,4.3 Z" fill="#236a9c"/></svg>
<div class="t" style="left:960.50px;top:878.48px;font-size:11.5px;line-height:14px;font-weight:400;color:#34608a;transform:scaleX(1.0885);transform-origin:0 0;">amely@shieldslangworth.info</div>
<svg style="position:absolute;left:1235px;top:859px;" width="16" height="11" viewBox="0 0 16 11" ><rect width="16" height="11" fill="#fff"/><rect width="4" height="11" fill="#d52b1e"/><rect x="12" width="4" height="11" fill="#d52b1e"/><path d="M8,2 L9,4.2 L10.6,3.6 L10,6.6 L11,6.4 L10.6,7.6 L8.3,7.8 V9.4 H7.7 V7.8 L5.4,7.6 L5,6.4 L6,6.6 L5.4,3.6 L7,4.2 Z" fill="#d52b1e"/></svg>
<div class="t" style="left:1255.70px;top:855.60px;font-size:14px;line-height:17px;font-weight:400;color:#333;transform:scaleX(0.9261);transform-origin:0 0;">CA (AMER)</div>
<div class="t" style="left:1235.50px;top:877.60px;font-size:12px;line-height:14px;font-weight:400;color:#333;transform:scaleX(1.0219);transform-origin:0 0;">Local time:</div>
<div class="t" style="left:1299.40px;top:875.40px;font-size:14px;line-height:17px;font-weight:400;color:#333;transform:scaleX(1.0278);transform-origin:0 0;">6:24 pm</div>
<div class="t" style="left:1357.00px;top:876.25px;font-size:13px;line-height:16px;font-weight:700;color:#666;">?</div>
<div class="t" style="left:1724.60px;top:855.60px;font-size:14px;line-height:17px;font-weight:400;color:#333;">0</div>
<svg style="position:absolute;left:1812px;top:866.5px;overflow:visible" width="11" height="14" viewBox="0 0 100 100" preserveAspectRatio="none"><path d="M30,48 V34 A20,20 0 0 1 70,34 V48" fill="none" stroke="#a94442" stroke-width="13"/><rect x="10" y="46" width="80" height="54" fill="#a94442"/></svg>
<div style="position:absolute;left:36px;top:903px;width:1829px;height:50px;background:#fff"></div>
<div class="t" style="left:66.00px;top:923.10px;font-size:14px;line-height:17px;font-weight:400;color:#333;transform:scaleX(1.0229);transform-origin:0 0;">Showing 1 to 10 of 758 Leads</div>
<div style="position:absolute;left:985px;top:913px;width:57px;height:30px;background:#dddddd;border-radius:4px"></div>
<div style="position:absolute;left:1050px;top:913px;width:84px;height:30px;background:#dddddd;border-radius:4px"></div>
<div style="position:absolute;left:1690px;top:913px;width:61px;height:30px;background:#dddddd;border-radius:4px"></div>
<div style="position:absolute;left:1759px;top:913px;width:57px;height:30px;background:#dddddd;border-radius:4px"></div>
<svg style="position:absolute;left:996.5px;top:922.5px;overflow:visible" width="7.5" height="10.5" viewBox="0 0 100 100" preserveAspectRatio="none"><path d="M82,10 L24,50 L82,90" fill="none" stroke="#333" stroke-width="30" stroke-linejoin="miter" stroke-miterlimit="10"/></svg>
<div class="t" style="left:1007.90px;top:920.80px;font-size:12px;line-height:14px;font-weight:400;color:#333;transform:scaleX(0.9945);transform-origin:0 0;">First</div>
<svg style="position:absolute;left:1061px;top:923px;overflow:visible" width="11" height="11" viewBox="0 0 100 100" preserveAspectRatio="none"><circle cx="50" cy="50" r="50" fill="#333"/><path d="M60,25 L35,50 L60,75" fill="none" stroke="#ddd" stroke-width="17"/></svg>
<div class="t" style="left:1075.80px;top:920.80px;font-size:12px;line-height:14px;font-weight:400;color:#333;transform:scaleX(1.0088);transform-origin:0 0;">Previous</div>
<div class="t" style="left:1701.30px;top:920.80px;font-size:12px;line-height:14px;font-weight:400;color:#333;transform:scaleX(1.0532);transform-origin:0 0;">Next</div>
<svg style="position:absolute;left:1730.2px;top:923px;overflow:visible" width="11" height="11" viewBox="0 0 100 100" preserveAspectRatio="none"><circle cx="50" cy="50" r="50" fill="#333"/><path d="M40,25 L65,50 L40,75" fill="none" stroke="#ddd" stroke-width="17"/></svg>
<div class="t" style="left:1771.00px;top:920.80px;font-size:12px;line-height:14px;font-weight:400;color:#333;transform:scaleX(0.9697);transform-origin:0 0;">Last</div>
<svg style="position:absolute;left:1796.7px;top:922.5px;overflow:visible" width="7.5" height="10.5" viewBox="0 0 100 100" preserveAspectRatio="none"><path d="M18,10 L76,50 L18,90" fill="none" stroke="#333" stroke-width="30" stroke-linejoin="miter" stroke-miterlimit="10"/></svg>
<div class="t" style="left:1334.50px;top:919.45px;font-size:13px;line-height:16px;font-weight:400;color:#333;transform:scaleX(1.0074);transform-origin:0 0;">Page</div>
<div style="position:absolute;left:1376.3px;top:913px;width:58px;height:28px;background:#fff;border:1px solid #cccccc;border-radius:3px"></div>
<div class="t" style="left:1387.30px;top:921.80px;font-size:12px;line-height:14px;font-weight:400;color:#555;">1</div>
<div class="t" style="left:1445.70px;top:919.45px;font-size:13px;line-height:16px;font-weight:400;color:#333;transform:scaleX(1.1395);transform-origin:0 0;">/75</div>
</body></html>
